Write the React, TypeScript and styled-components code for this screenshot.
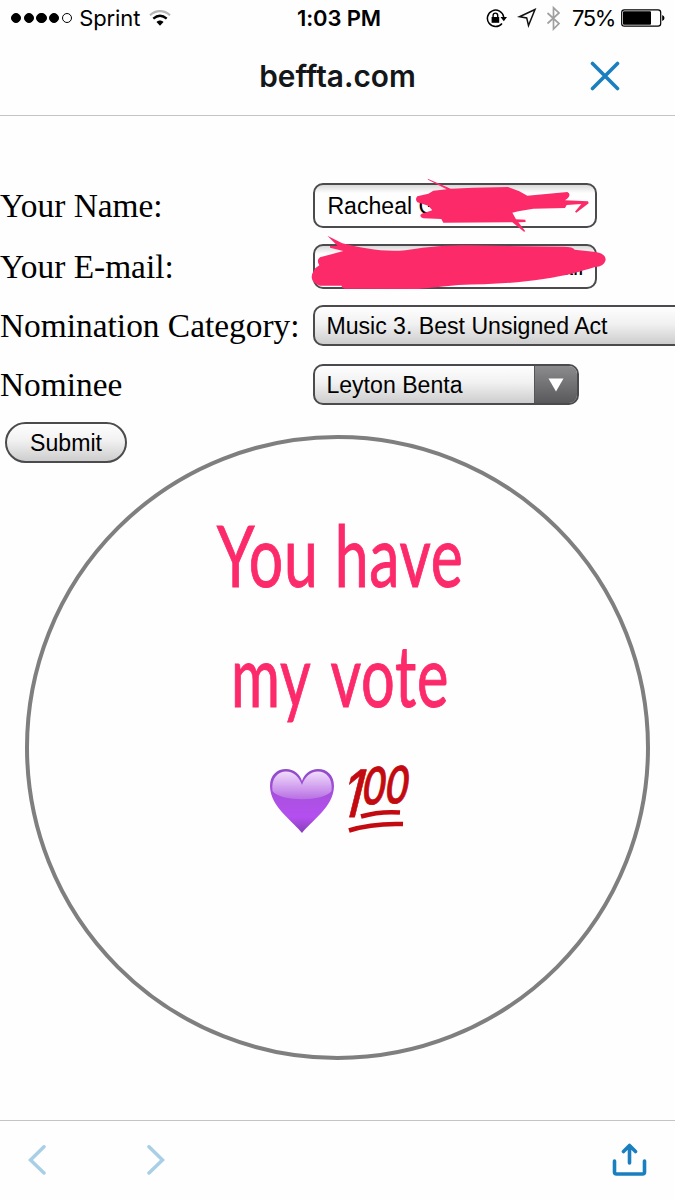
import type { ReactNode } from 'react';
import styled, { createGlobalStyle } from 'styled-components';

const GlobalStyle = createGlobalStyle`
* {
  box-sizing: border-box;
}
body {
  margin: 0;
  background: #fefefe;
}
`;
const Page = styled.div`
width: 675px;
height: 1200px;
display: flex;
flex-direction: column;
overflow: hidden;
background: #fefefe;
color: #000;
`;
const StatusBar = styled.div`
height: 36px;
padding: 0 10px 0 11px;
display: grid;
grid-template-columns: 1fr auto 1fr;
align-items: center;
font-family: Inter, sans-serif;
font-size: 22px;
line-height: 36px;
`;
const StatusGroup = styled.div<{ $end?: boolean }>`
display: flex;
align-items: center;
justify-content: ${({ $end }) => ($end ? 'flex-end' : 'flex-start')};
`;
const Signal = styled.div`
display: flex;
gap: 2.3px;
margin-right: 7px;
`;
const Dot = styled.i<{ $empty?: boolean }>`
width: 10.4px;
height: 10.4px;
border-radius: 50%;
border: 1px solid #000;
background: ${({ $empty }) => ($empty ? 'transparent' : '#000')};
`;
const Carrier = styled.span`
letter-spacing: -0.1px;
margin-right: 9px;
`;
const Time = styled.span`
font-weight: 600;
font-size: 22px;
letter-spacing: -0.15px;
padding-left: 2px;
`;
const Percent = styled.span`
font-size: 22px;
letter-spacing: -1.4px;
margin: 0 6px 0 10px;
`;
const Header = styled.header`
height: 80px;
display: grid;
grid-template-columns: 1fr auto 1fr;
align-items: center;
border-bottom: 1px solid #c4c4c6;
`;
const Site = styled.h1`
grid-column: 2;
margin: 0;
font-family: Inter, sans-serif;
font-size: 29.8px;
font-weight: 600;
line-height: 40px;
color: #14171a;
`;
const CloseButton = styled.button`
justify-self: end;
display: flex;
margin-right: 55px;
padding: 0;
border: 0;
background: none;
`;
const Content = styled.main`
flex: 1;
position: relative;
padding-top: 67px;
`;
const Row = styled.div<{ $height: number; $gap: number }>`
height: ${({ $height }) => $height}px;
margin-bottom: ${({ $gap }) => $gap}px;
display: grid;
grid-template-columns: 313.4px auto;
align-items: center;
justify-content: start;
`;
const Label = styled.label`
font-family: "Liberation Serif", serif;
font-size: 33.4px;
line-height: 38px;
white-space: nowrap;
`;
const Control = styled.div`
height: 100%;
display: flex;
align-items: center;
border: 2px solid #4b4b4d;
border-radius: 10px;
overflow: hidden;
font-family: "Liberation Sans", sans-serif;
font-size: 23.1px;
line-height: 28px;
white-space: nowrap;
`;
const TextInput = styled(Control)<{ $right?: boolean }>`
width: 284px;
padding: 1px 12px 0;
justify-content: ${({ $right }) => ($right ? 'flex-end' : 'flex-start')};
background: linear-gradient(#d9d9da, #fefefe 8px);
`;
const SelectBox = styled(Control)<{ $width: number }>`
width: ${({ $width }) => $width}px;
padding-left: 11px;
justify-content: space-between;
background: linear-gradient(#fefefe, #f1f1f1 45%, #cdcdcd);
`;
const SelectText = styled.span`
padding-top: 1px;
`;
const Arrow = styled.span`
width: 43px;
height: 100%;
display: flex;
align-items: center;
justify-content: center;
border-left: 1px solid #555;
background: linear-gradient(#8b8b8d, #59595b);
`;
const Submit = styled.button`
width: 122px;
height: 41px;
margin-left: 5px;
padding: 2px 0 0;
border: 2px solid #4b4b4d;
border-radius: 21px;
background: linear-gradient(#fefefe, #f1f1f1 45%, #cdcdcd);
font-family: "Liberation Sans", sans-serif;
font-size: 23.1px;
color: #000;
`;
const Scribble = styled.svg`
position: absolute;
left: 300px;
top: 54px;
width: 320px;
height: 125px;
`;
const Bubble = styled.section`
position: absolute;
left: 25px;
top: 319px;
width: 625px;
height: 625px;
padding-top: 60px;
display: flex;
flex-direction: column;
align-items: center;
border: 4.5px solid #7f7f7f;
border-radius: 50%;
`;
const Message = styled.p<{ $stretch: number; $spacing: number }>`
margin: 0;
height: 120px;
font-family: Lato, sans-serif;
font-size: 86px;
line-height: 110px;
letter-spacing: 1px;
word-spacing: ${({ $spacing }) => $spacing}px;
white-space: nowrap;
color: #fc2a6a;
-webkit-text-stroke: 1px #fc2a6a;
transform: translateX(2.5px) scaleX(${({ $stretch }) => $stretch});
`;
const Emojis = styled.div`
display: flex;
align-items: flex-end;
gap: 11px;
margin: 7px 0 0 6px;
`;
const Toolbar = styled.footer`
height: 80px;
padding: 0 28px 2px;
display: flex;
align-items: center;
border-top: 1px solid #c4c4c6;
`;
const ToolButton = styled.button<{ $push?: boolean }>`
display: flex;
padding: 0;
border: 0;
background: none;
margin-left: ${({ $push }) => ($push ? 'auto' : '0')};
margin-right: ${({ $push }) => ($push ? '0' : '101px')};
`;

function Field({ label, height, gap, children }: { label: string; height: number; gap: number; children: ReactNode }) {
  return (
    <Row $height={height} $gap={gap}>
      <Label>{label}</Label>
      {children}
    </Row>
  );
}

function WifiIcon() {
  return (
    <svg width="22" height="17" viewBox="0 0 22 17" fill="none">
      <path d="M1 5.2C7 -.2 15 -.2 21 5.2" stroke="#b5b5b5" strokeWidth="2.2" />
      <path d="M4.3 8.7C8.5 5 13.5 5 17.7 8.7" stroke="#000" strokeWidth="2.3" />
      <path d="M7.5 12C9.5 10 12.5 10 14.5 12L11 15.8Z" fill="#000" />
    </svg>
  );
}

function StatusIcons() {
  return (
    <svg width="76" height="26" viewBox="0 0 76 26" fill="none">
      <path d="M16 18.5A8.200 8.200 0 1 1 17.700 12" stroke="#000" strokeWidth="1.500" />
      <path d="M14.500 12h6.500l-3.200 4.200z" fill="#000" />
      <path d="M5.600 12h7.600v5.800H5.600z" fill="#000" />
      <path d="M7.100 12v-1.600a2.300 2.300 0 0 1 4.600 0V12" stroke="#000" strokeWidth="1.400" />
      <path d="M49 4.500L33.500 11.700L40.700 12.900L42.500 20.500Z" stroke="#111" strokeWidth="1.500" />
      <path d="M61.500 8L73 18.500L67.500 24V2.800L73 8L61.500 18.500" stroke="#a0a0a0" strokeWidth="1.700" />
    </svg>
  );
}

function BatteryIcon() {
  return (
    <svg width="44" height="18" viewBox="0 0 44 18">
      <rect x=".7" y=".9" width="39" height="16.2" rx="2.7" fill="none" stroke="#000" strokeWidth="1.2" />
      <rect x="2" y="2.2" width="28" height="13.6" rx="1" />
      <path d="M41.200 6q2.300.8 2.300 3t-2.300 3z" />
    </svg>
  );
}

function HeartIcon() {
  return (
    <svg width="66" height="66" viewBox="0 0 66 66">
      <defs>
        <linearGradient id="heart" x1="0" y1="0" x2="0" y2="1">
          <stop offset="0" stopColor="#8f4bc8" />
          <stop offset=".5" stopColor="#ad50e4" />
          <stop offset=".75" stopColor="#b54ff0" />
          <stop offset="1" stopColor="#8540b8" />
        </linearGradient>
        <linearGradient id="shine" x1="0" y1="0" x2="0" y2="1">
          <stop offset="0" stopColor="#f1dcfb" />
          <stop offset="1" stopColor="#b870e4" />
        </linearGradient>
      </defs>
      <path d="M33 65C25 54 1 39 1 18C1 7 8 1 17 1C25 1 31 6 33 13C35 6 41 1 49 1C58 1 65 7 65 18C65 39 41 54 33 65Z" fill="url(#heart)" />
      <path d="M3.5 23C2 10 9 3.5 17 3.5C25 3.5 30 9 33 17C36 9 41 3.5 49 3.5C57 3.5 64 10 62.5 23C55 34 11 34 3.5 23Z" fill="url(#shine)" />
    </svg>
  );
}

function HundredIcon() {
  return (
    <svg width="66" height="88" viewBox="0 -20 66 88" overflow="visible" fill="#c30a10" stroke="#c30a10">
      <g fontFamily="Inter, sans-serif" fontWeight="500" strokeWidth=".8" strokeLinejoin="round">
        <text transform="matrix(.72 0 -.25 1 -7 51)" fontSize="65">1</text>
        <text transform="matrix(.74 -.05 -.15 1 14 39)" fontSize="51">0</text>
        <text transform="matrix(.74 -.05 -.15 1 37 38)" fontSize="51">0</text>
      </g>
      <path d="M15 50.5Q34 45 54 46.5" fill="none" strokeWidth="4.500" />
      <path d="M3 64.500Q26 57 57 58" fill="none" strokeWidth="4.500" />
    </svg>
  );
}

export default function App() {
  return (
    <Page>
      <GlobalStyle />
      <StatusBar>
        <StatusGroup>
          <Signal>
            <Dot /><Dot /><Dot /><Dot /><Dot $empty />
          </Signal>
          <Carrier>Sprint</Carrier>
          <WifiIcon />
        </StatusGroup>
        <Time>1:03 PM</Time>
        <StatusGroup $end>
          <StatusIcons />
          <Percent>75%</Percent>
          <BatteryIcon />
        </StatusGroup>
      </StatusBar>
      <Header>
        <Site>beffta.com</Site>
        <CloseButton aria-label="Close">
          <svg width="30" height="30" viewBox="0 0 30 30" stroke="#1b7fbf" strokeWidth="3.6" strokeLinecap="round">
            <path d="M2.5 2.5L27.5 27.5M27.5 2.5L2.5 27.5" />
          </svg>
        </CloseButton>
      </Header>
      <Content>
        <Field label="Your Name:" height={45} gap={16}>
          <TextInput>Racheal Gr</TextInput>
        </Field>
        <Field label="Your E-mail:" height={45} gap={16}>
          <TextInput $right>ail</TextInput>
        </Field>
        <Field label="Nomination Category:" height={41} gap={18}>
          <SelectBox $width={380}>
            <SelectText>Music 3. Best Unsigned Act</SelectText>
          </SelectBox>
        </Field>
        <Field label="Nominee" height={41} gap={17}>
          <SelectBox $width={266}>
            <SelectText>Leyton Benta</SelectText>
            <Arrow>
              <svg width="16" height="14" viewBox="0 0 16 14">
                <path d="M.5.5h15L8 13.5z" fill="#fff" />
              </svg>
            </Arrow>
          </SelectBox>
        </Field>
        <Submit>Submit</Submit>
        {/* marker strokes hiding the private details */}
        <Scribble viewBox="0 0 960 375" fill="#fd2a69">
          <path d="M383 26L452 56L520 53L624 51L658 64L682 77L802 66Q814 72 804 84L795 91L864 94L866 100L829 128L825 125L844 102L800 105L795 114L700 116L655 124L637 128L648 148L676 149L677 156L655 157L676 184L672 185L637 157L430 158L424 147L370 145Q355 139 365 131L397 121L385 107L352 97Q344 88 352 79L385 71L400 62L440 58L384 29Z" />
          <path d="M82 197L127 220C190 235 250 247 316 241C390 229 440 226 510 226L790 230Q820 230 824 239L888 246Q917 251 917 270Q912 290 885 291C840 305 800 317 730 327C650 340 560 343 475 345L355 357L135 356Q124 355 125 347L60 347Q36 341 35 322Q37 298 58 286Q48 270 60 262L130 243L90 233V228L113 228Z" />
        </Scribble>
        <Bubble>
          <Message $stretch={0.706} $spacing={0}>You have</Message>
          <Message $stretch={0.692} $spacing={9}>my vote</Message>
          <Emojis>
            <HeartIcon />
            <HundredIcon />
          </Emojis>
        </Bubble>
      </Content>
      <Toolbar>
        <ToolButton aria-label="Back">
          <svg width="18" height="30" viewBox="0 0 18 30" fill="none" stroke="#a9cfe6" strokeWidth="3.5" strokeLinecap="round">
            <path d="M16 1.8L2.5 15L16 28" />
          </svg>
        </ToolButton>
        <ToolButton aria-label="Forward">
          <svg width="18" height="30" viewBox="0 0 18 30" fill="none" stroke="#a9cfe6" strokeWidth="3.5" strokeLinecap="round">
            <path d="M2 1.8L15.5 15L2 28" />
          </svg>
        </ToolButton>
        <ToolButton $push aria-label="Share">
          <svg width="35" height="34" viewBox="0 0 35 34" fill="none" stroke="#1b7fbf" strokeWidth="3.6" strokeLinecap="round" strokeLinejoin="round">
            <path d="M2.5 18V29Q2.5 31 4.5 31H30.5Q32.5 31 32.5 29V18M17.5 20V2.5M11.5 8.5L17.5 2.5L23.5 8.5" />
          </svg>
        </ToolButton>
      </Toolbar>
    </Page>
  );
}
